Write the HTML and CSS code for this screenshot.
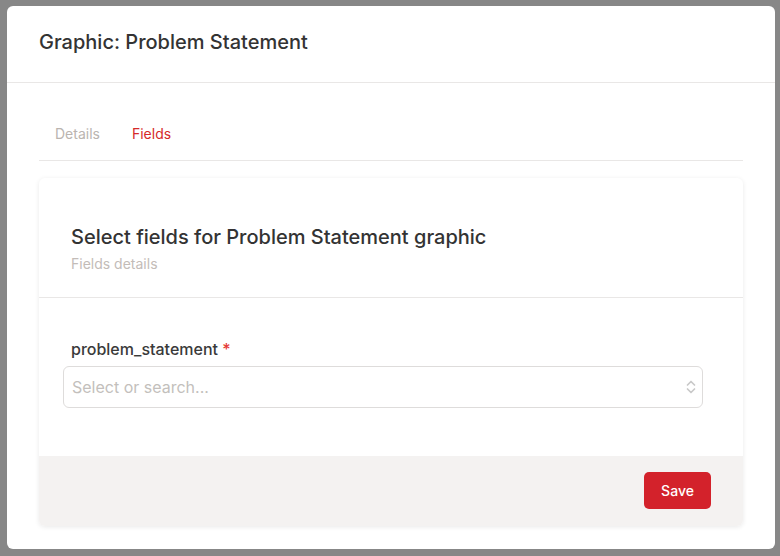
FILE: index.html
```html
<!DOCTYPE html>
<html>
  <head>
    <title>Graphic: Problem Statement</title>
    <link rel="stylesheet" href="styles.css">
  </head>
  <body>
    <div class="modal">
      <div class="modal-header">
        <h2>Graphic: Problem Statement</h2>
      </div>
      <div class="modal-body">
        <div class="tabs">
          <span class="tab">Details</span>
          <span class="tab active">Fields</span>
        </div>
        <div class="card">
          <div class="card-header">
            <h3>Select fields for Problem Statement graphic</h3>
            <p>Fields details</p>
          </div>
          <div class="card-body">
            <label>problem_statement <span class="req">*</span></label>
            <div class="select">
              <span class="placeholder">Select or search...</span>
              <svg class="chevrons" width="12" height="18" viewBox="0 0 12 18">
                <path d="M2.5 7 L6 3.5 L9.5 7" fill="none" stroke="#c9c9c9" stroke-width="1.7" stroke-linecap="round" stroke-linejoin="round"/>
                <path d="M2.5 11 L6 14.5 L9.5 11" fill="none" stroke="#c9c9c9" stroke-width="1.7" stroke-linecap="round" stroke-linejoin="round"/>
              </svg>
            </div>
          </div>
          <div class="card-footer">
            <button type="button">Save</button>
          </div>
        </div>
      </div>
    </div>
  </body>
</html>
```

FILE: styles.css
```css
html, body {
height: 100%;
}
body {
margin: 0;
background: #878787;
font-family: Inter, "Noto Sans", sans-serif;
color: #333;
overflow: hidden;
}
.modal {
margin: 6px 0 0 7px;
width: 768px;
height: 543px;
background: #fff;
border-radius: 6px;
}
.modal-header {
padding: 24px 32px 28px;
border-bottom: 1px solid #e9e7e6;
}
h2 {
margin: 0;
font-size: 20px;
line-height: 24px;
font-weight: 500;
color: #333;
}
.modal-body {
padding: 0 32px;
}
.tabs {
display: flex;
margin-top: 25px;
border-bottom: 1px solid #e9e7e6;
}
.tab {
padding: 16px;
font-size: 14px;
line-height: 20px;
color: #bab4b0;
}
.tab.active {
color: #d52a2a;
}
.card {
margin-top: 17px;
border-radius: 6px;
background: #fff;
box-shadow: 0 1px 5px rgba(0, 0, 0, 0.09);
overflow: hidden;
}
.card-header {
padding: 47px 32px 23px;
border-bottom: 1px solid #e9e7e6;
}
h3 {
margin: 0;
font-size: 20px;
line-height: 24px;
font-weight: 500;
color: #333;
}
.card-header p {
margin: 5px 0 0;
font-size: 14px;
line-height: 20px;
color: #c3bcb8;
}
.card-body {
padding: 41px 40px 48px 24px;
}
label {
display: block;
padding-left: 8px;
font-size: 16px;
line-height: 20px;
font-weight: 500;
color: #3a3a3a;
}
.req {
color: #e53935;
}
.select {
display: flex;
align-items: center;
justify-content: space-between;
margin-top: 7px;
height: 40px;
padding: 0 5px 0 8px;
border: 1px solid #dedcdb;
border-radius: 6px;
}
.placeholder {
font-size: 16px;
color: #c3bfbc;
}
.card-footer {
display: flex;
justify-content: flex-end;
padding: 16px 32px 17px;
background: #f4f2f1;
}
button {
width: 67px;
height: 37px;
border: none;
border-radius: 5px;
background: #d3222b;
color: #fff;
font-family: Inter, "Noto Sans", sans-serif;
font-size: 14px;
font-weight: 500;
}
```
